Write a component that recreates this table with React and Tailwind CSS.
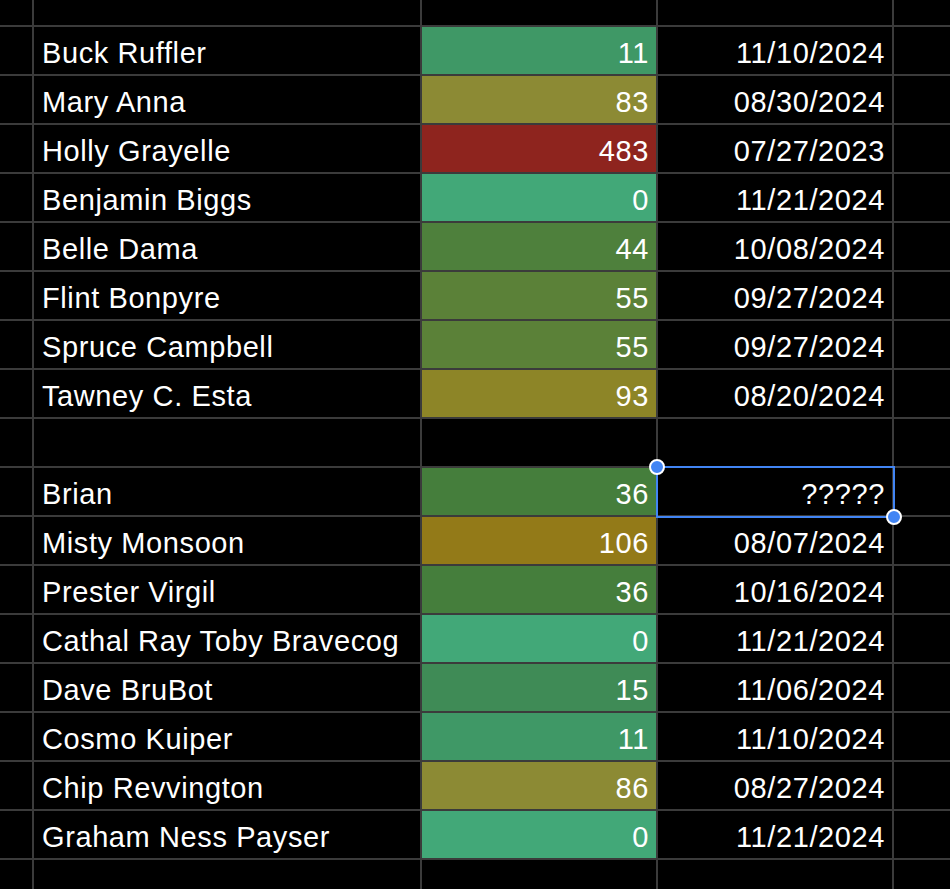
import React from 'react';

const rows = [
  { name: 'Buck Ruffler', n: '11', bg: 'bg-[#3f9866]', date: '11/10/2024' },
  { name: 'Mary Anna', n: '83', bg: 'bg-[#8c8a34]', date: '08/30/2024' },
  { name: 'Holly Grayelle', n: '483', bg: 'bg-[#8e241e]', date: '07/27/2023' },
  { name: 'Benjamin Biggs', n: '0', bg: 'bg-[#42a878]', date: '11/21/2024' },
  { name: 'Belle Dama', n: '44', bg: 'bg-[#4e803c]', date: '10/08/2024' },
  { name: 'Flint Bonpyre', n: '55', bg: 'bg-[#5b8138]', date: '09/27/2024' },
  { name: 'Spruce Campbell', n: '55', bg: 'bg-[#5b8138]', date: '09/27/2024' },
  { name: 'Tawney C. Esta', n: '93', bg: 'bg-[#8d8527]', date: '08/20/2024' },
  null,
  { name: 'Brian', n: '36', bg: 'bg-[#457e3c]', date: '?????', selected: true },
  { name: 'Misty Monsoon', n: '106', bg: 'bg-[#937a18]', date: '08/07/2024' },
  { name: 'Prester Virgil', n: '36', bg: 'bg-[#457e3c]', date: '10/16/2024' },
  { name: 'Cathal Ray Toby Bravecog', n: '0', bg: 'bg-[#42a878]', date: '11/21/2024' },
  { name: 'Dave BruBot', n: '15', bg: 'bg-[#3f8b56]', date: '11/06/2024' },
  { name: 'Cosmo Kuiper', n: '11', bg: 'bg-[#3f9866]', date: '11/10/2024' },
  { name: 'Chip Revvington', n: '86', bg: 'bg-[#8c8a34]', date: '08/27/2024' },
  { name: 'Graham Ness Payser', n: '0', bg: 'bg-[#42a878]', date: '11/21/2024' },
];

const text = "text-white text-[29px] leading-[32px] tracking-[0.6px] font-['Liberation_Sans',Arial,sans-serif] whitespace-nowrap";

function Edge({ h }) {
  return (
    <>
      <div className={`bg-black ${h}`} />
      <div className={`bg-black ${h}`} />
      <div className={`bg-black ${h}`} />
      <div className={`bg-black ${h}`} />
      <div className={`bg-black ${h}`} />
    </>
  );
}

export default function App() {
  return (
    <div className="w-[950px] h-[889px] overflow-hidden bg-black">
      <div className="grid grid-cols-[32px_386px_234px_234px_1fr] gap-[2px] bg-[#3b3b3b]">
        <Edge h="h-[25px]" />
        {rows.map((r, i) =>
          r === null ? (
            <React.Fragment key={i}>
              <div className="bg-black h-[47px]" />
              <div className="bg-black h-[47px]" />
              <div className="bg-black h-[47px]" />
              <div className="bg-black h-[47px]" />
              <div className="bg-black h-[47px]" />
            </React.Fragment>
          ) : (
            <React.Fragment key={i}>
              <div className="bg-black h-[47px]" />
              <div className="bg-black h-[47px] flex items-end pb-[5px] pl-[8px] overflow-hidden">
                <span className={text}>{r.name}</span>
              </div>
              <div className={`${r.bg} h-[47px] flex items-end justify-end pb-[5px] pr-[7px]`}>
                <span className={text}>{r.n}</span>
              </div>
              <div className="bg-black h-[47px] flex items-end justify-end pb-[5px] pr-[7px] relative">
                <span className={text}>{r.date}</span>
                {r.selected && (
                  <div className="absolute -left-[2px] -top-[2px] -right-[3px] -bottom-[3px] border-2 border-[#4285f4] z-10">
                    <div className="absolute -left-[9px] -top-[9px] w-[16px] h-[16px] rounded-full bg-[#4285f4] border-2 border-white" />
                    <div className="absolute -right-[9px] -bottom-[9px] w-[16px] h-[16px] rounded-full bg-[#4285f4] border-2 border-white" />
                  </div>
                )}
              </div>
              <div className="bg-black h-[47px]" />
            </React.Fragment>
          )
        )}
        <Edge h="h-[29px]" />
      </div>
    </div>
  );
}
